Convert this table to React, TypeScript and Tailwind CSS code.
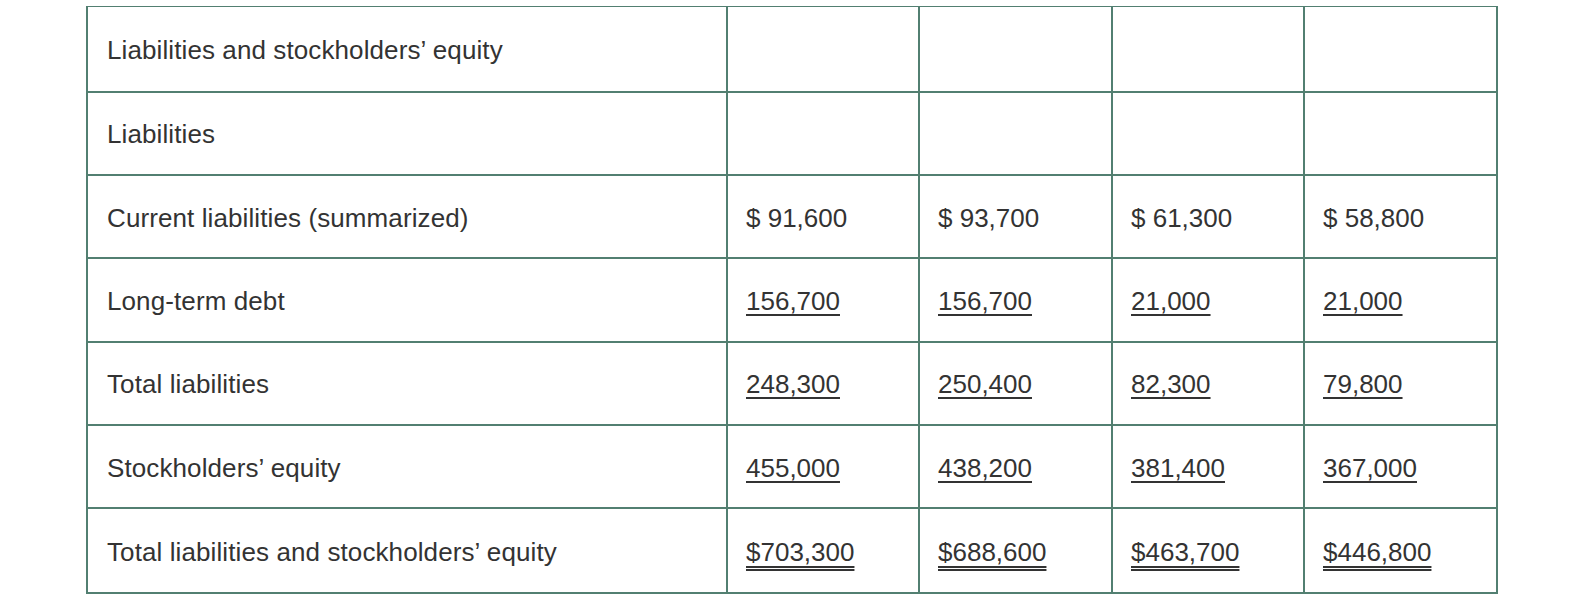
const rows: { label: string; values: string[]; line?: "single" | "double" }[] = [
  { label: "Liabilities and stockholders’ equity", values: ["", "", "", ""] },
  { label: "Liabilities", values: ["", "", "", ""] },
  { label: "Current liabilities (summarized)", values: ["$ 91,600", "$ 93,700", "$ 61,300", "$ 58,800"] },
  { label: "Long-term debt", values: ["156,700", "156,700", "21,000", "21,000"], line: "single" },
  { label: "Total liabilities", values: ["248,300", "250,400", "82,300", "79,800"], line: "single" },
  { label: "Stockholders’ equity", values: ["455,000", "438,200", "381,400", "367,000"], line: "single" },
  {
    label: "Total liabilities and stockholders’ equity",
    values: ["$703,300", "$688,600", "$463,700", "$446,800"],
    line: "double",
  },
];

export default function App() {
  return (
    <div className="bg-white w-[1594px] h-[616px] pt-[6px] pl-[86px] font-['Liberation_Sans',Arial,sans-serif] text-[#333333]">
      <div className="w-[1412px] border-t border-b-2 border-r-2 border-[#527f71]">
        {rows.map((row, i) => (
          <div
            key={i}
            className={`grid grid-cols-[640px_192px_193px_192px_193px] ${
              i === 0 ? "h-[85.5px]" : i === rows.length - 1 ? "h-[82.6px]" : "h-[83.4px]"
            } ${i < rows.length - 1 ? "border-b-2 border-[#527f71]" : ""}`}>
            <div className="border-l-2 border-[#527f71] flex items-center pl-[19px] pt-[3px] text-[26px] tracking-[0.1px]">
              {row.label}
            </div>
            {row.values.map((v, j) => (
              <div key={j} className="border-l-2 border-[#527f71] flex items-center pl-[18px] pt-[3px] text-[26px]">
                {v && (
                  <span
                    className={
                      row.line === "single"
                        ? "underline decoration-[1.5px] underline-offset-[4px]"
                        : row.line === "double"
                        ? "underline decoration-double decoration-[2px] underline-offset-[5px]"
                        : ""
                    }>
                    {v}
                  </span>
                )}
              </div>
            ))}
          </div>
        ))}
      </div>
    </div>
  );
}
